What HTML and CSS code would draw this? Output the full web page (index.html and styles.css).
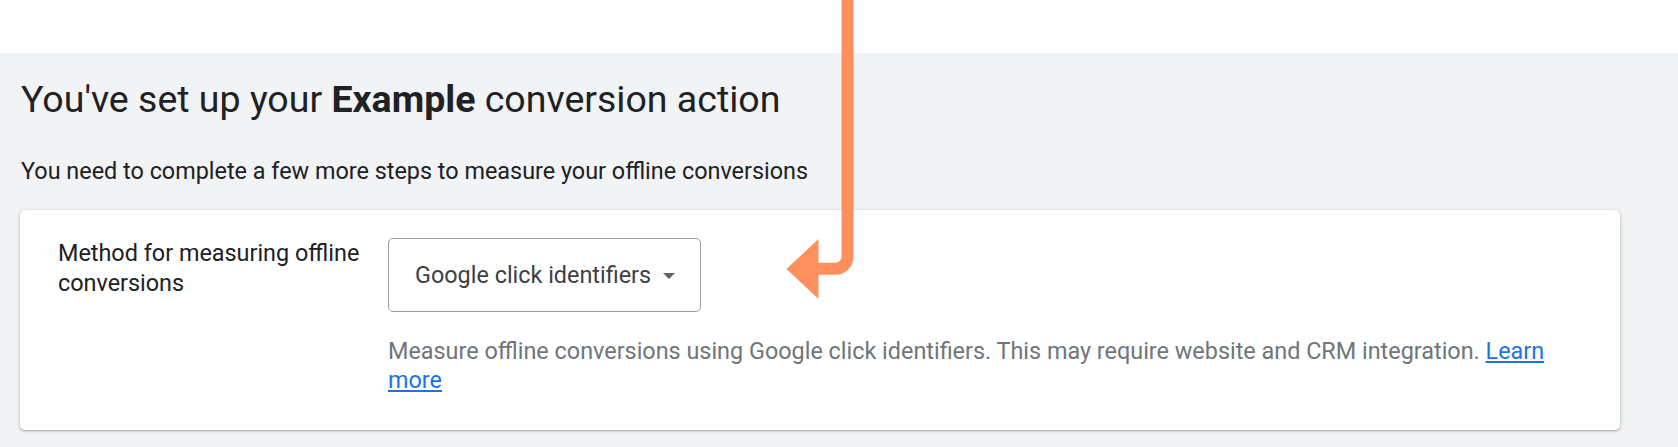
FILE: index.html
```html
<!doctype html>
<html lang="en">
<head>
	<meta charset="UTF-8">
	<title>Conversion action</title>
	<link rel="stylesheet" href="styles.css">
</head>
<body>
	<!-- top strip -->
	<div class="top-bar"></div>

	<!-- main area -->
	<div class="main">
		<h1 class="title">You've set up your <b>Example</b> conversion action</h1>
		<p class="subtitle">You need to complete a few more steps to measure your offline conversions</p>

		<div class="card">
			<div class="card-label">Method for measuring offline conversions</div>
			<div class="card-body">
				<div class="select">
					<span class="select-text">Google click identifiers</span>
					<span class="caret"></span>
				</div>
				<p class="hint">Measure offline conversions using Google click identifiers. This may require website and CRM integration. <a href="#">Learn more</a></p>
			</div>
		</div>
	</div>

	<!-- annotation arrow -->
	<svg class="arrow" width="90" height="301" viewBox="780 0 90 301">
		<path d="M847.5 0 V256.7 A12 12 0 0 1 835.5 268.7 H812" fill="none" stroke="#ff8f5c" stroke-width="12"/>
		<polygon points="786.5,269 818.5,239 818.5,299" fill="#ff8f5c"/>
	</svg>
</body>
</html>
```

FILE: styles.css
```css
* {
	margin: 0px;
	padding: 0px;
	box-sizing: border-box;
}

html, body {
	height: 100%;
}

body {
	display: flex;
	flex-direction: column;
	background: #fff;
	font-family: Roboto, "Liberation Sans", sans-serif;
	color: #202124;
	position: relative;
}

a {
	color: #1a73e8;
	text-decoration: underline;
}

.top-bar {
	height: 53px;
	background: #fff;
}

.main {
	flex: 1;
	background: #f1f3f4;
	padding: 24px 58px 0 20px;
}

.title {
	font-size: 37.5px;
	line-height: 44px;
	font-weight: 400;
	padding-left: 1px;
}

.title b {
	font-weight: 700;
}

.subtitle {
	margin-top: 35px;
	font-size: 23.4px;
	line-height: 30px;
	padding-left: 1px;
}

.card {
	margin-top: 24px;
	background: #fff;
	border-radius: 5px;
	box-shadow: 0 1px 2px rgba(60,64,67,0.3), 0 1px 3px 1px rgba(60,64,67,0.12);
	display: grid;
	grid-template-columns: 330px 1fr;
	padding: 28px 38px 38px 38px;
	height: 220px;
}

.card-label {
	font-size: 23.4px;
	line-height: 30px;
	color: #202124;
	padding-right: 20px;
}

.select {
	width: 313px;
	height: 74px;
	border: 1px solid #9aa0a6;
	border-radius: 5px;
	display: flex;
	align-items: center;
	padding: 0 20px 0 26px;
	font-size: 23.4px;
	color: #3c4043;
	gap: 12px;
	white-space: nowrap;
}

.select-text {
	flex-shrink: 0;
}

.caret {
	flex-shrink: 0;
	width: 0;
	height: 0;
	border-left: 6px solid transparent;
	border-right: 6px solid transparent;
	border-top: 6px solid #5f6368;
	margin-top: 2px;
}

.hint {
	margin-top: 25px;
	font-size: 23.4px;
	line-height: 29px;
	color: #70757a;
}

.arrow {
	position: absolute;
	top: 0;
	left: 780px;
}
```
